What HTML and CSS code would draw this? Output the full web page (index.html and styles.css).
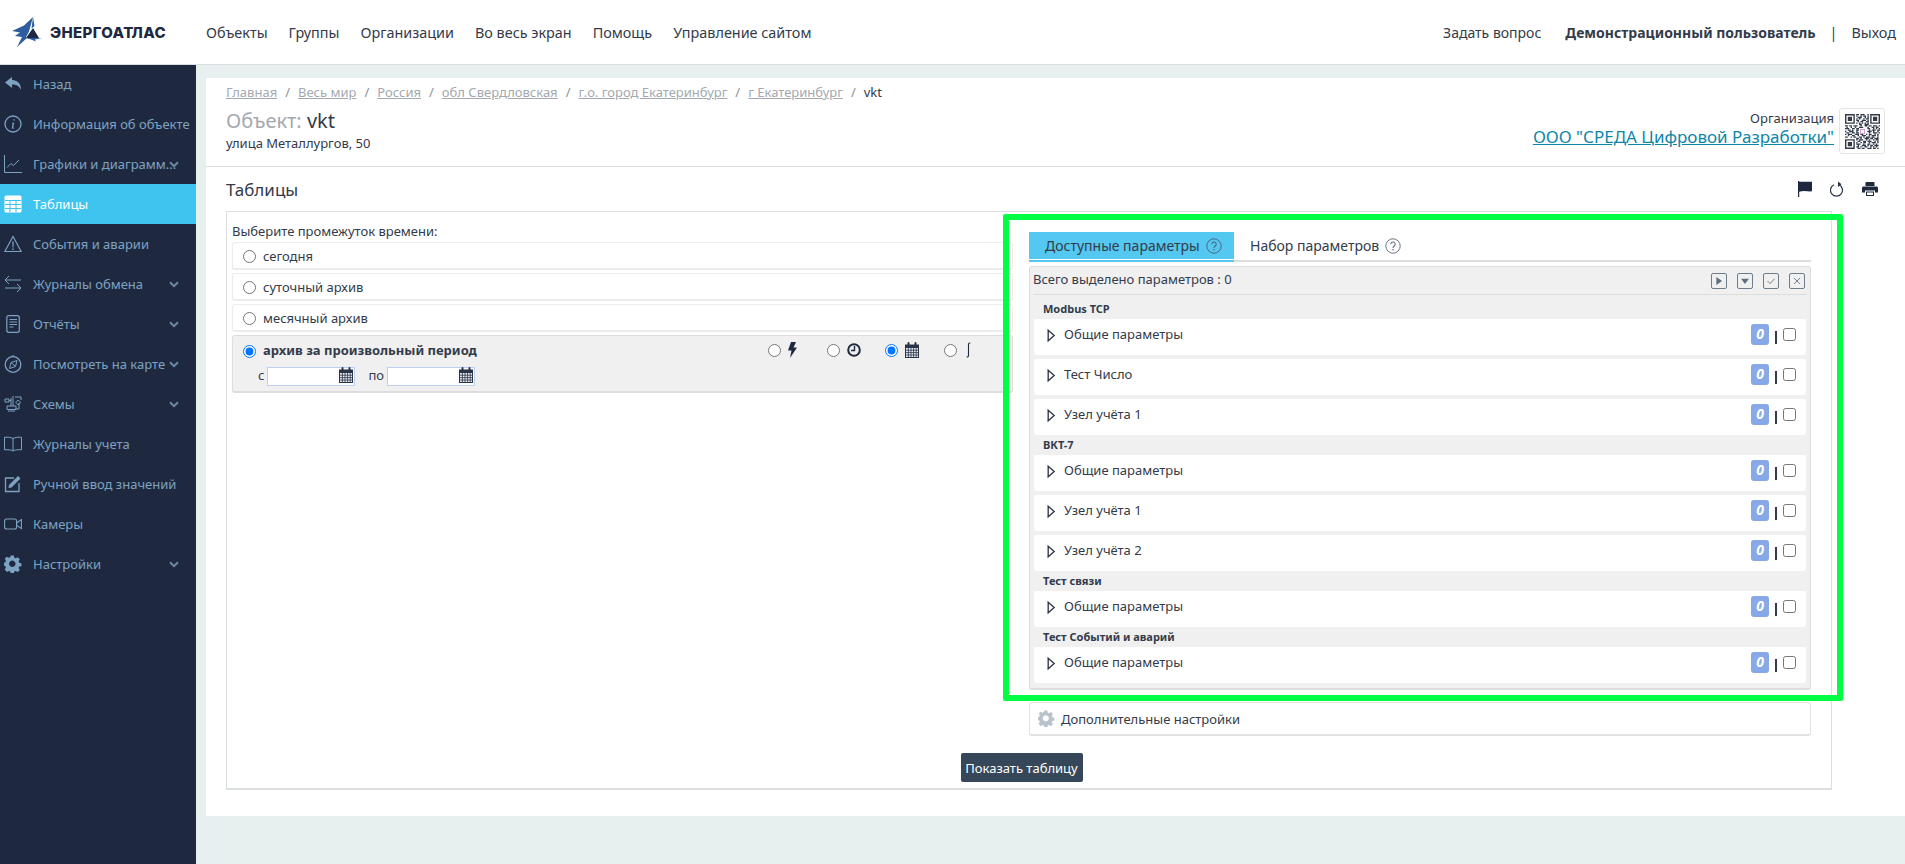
FILE: index.html
```html
<!DOCTYPE html>
<html lang="ru">
<head>
<meta charset="utf-8">
<title>Таблицы</title>
<link rel="stylesheet" href="styles.css">
</head>
<body>
<svg class="sprite" aria-hidden="true">
  <symbol id="chev" viewBox="0 0 10 7"><path d="M1 1.2l4 4 4-4" fill="none" stroke="currentColor" stroke-width="2"/></symbol>
  <symbol id="cal" viewBox="0 0 14 16"><path d="M0 2.5h2.5V1a1 1 0 0 1 2 0v1.5h5V1a1 1 0 0 1 2 0v1.5H14V16H0z" fill="#2a3448"/><path d="M1 6h12v9H1z" fill="#e9edf2"/><path d="M1 8.2h12M1 10.6h12M1 13h12M3.4 6v9M6 6v9M8.6 6v9M11.2 6v9" stroke="#2a3448" stroke-width=".8"/></symbol>
  <symbol id="tri" viewBox="0 0 9 13"><path d="M1.2 1.2l6 5.3-6 5.3z" fill="none" stroke="#333b4a" stroke-width="1.4"/></symbol>
  <symbol id="q" viewBox="0 0 16 16"><circle cx="8" cy="8" r="7.2" fill="none" stroke="currentColor"/><path d="M5.8 6.2a2.2 2.2 0 1 1 3.4 1.8c-.8.5-1.2 1-1.2 1.9" fill="none" stroke="currentColor" stroke-width="1.1"/><circle cx="8" cy="11.8" r=".8" fill="currentColor"/></symbol>
</svg>

<header class="topbar">
  <a class="logo">
    <svg class="logo-mark" viewBox="0 0 30 30"><path d="M21 0L12 8.500 0 14l8 1.500-5 3.500 7 1L5 30l10-9-1-1 3-5.500z" fill="#2f5d9f"/><path d="M21 0l1.500 9-3 2.500z" fill="#2f5d9f"/><path d="M21 11l6 10H14z" fill="#1e293f"/><path d="M14 21h16l-7 1.500 1 2-5-2z" fill="#2f5d9f"/></svg>
    <span class="logo-text">ЭНЕРГОАТЛАС</span>
  </a>
  <nav class="topnav">
    <a>Объекты</a><a>Группы</a><a>Организации</a><a>Во весь экран</a><a>Помощь</a><a>Управление сайтом</a>
  </nav>
  <div class="topright">
    <a class="ask">Задать вопрос</a>
    <b class="user">Демонстрационный пользователь</b>
    <span class="sep">|</span>
    <a>Выход</a>
  </div>
</header>

<div class="layout">
  <aside class="sidebar">
    <a class="side-item"><svg class="side-ico" viewBox="0 0 18 16"><path d="M8 1L1 6.500 8 12V8.500c4 0 7 1 9 5.500 0-6-3-9.500-9-10z" fill="currentColor"/></svg><span>Назад</span></a>
    <a class="side-item"><svg class="side-ico" viewBox="0 0 18 18"><circle cx="9" cy="9" r="8" fill="none" stroke="currentColor" stroke-width="1.300"/><path d="M9.500 4.200h1.300v1.400H9.500zM8 7.800h2.200l-1 5h1.200v.8H7.700l1-5H8z" fill="currentColor"/></svg><span>Информация об объекте</span></a>
    <a class="side-item"><svg class="side-ico" viewBox="0 0 18 18"><path d="M.5 0v17.500H18M3 12.500l4-4 2.500 2L15 5" fill="none" stroke="currentColor"/></svg><span>Графики и диаграмм...</span><svg class="chev"><use href="#chev"/></svg></a>
    <a class="side-item active"><svg class="side-ico" viewBox="0 0 18 18"><rect x=".5" y=".5" width="17" height="17" rx="1.500" fill="#fff"/><path d="M1 5.500h16M1 9.500h16M1 13.500h16M6 5.500V17M12 5.500V17" stroke="#3fc4f0" stroke-width="1"/></svg><span>Таблицы</span></a>
    <a class="side-item"><svg class="side-ico" viewBox="0 0 18 18"><path d="M9 1.500L.8 16.500h16.400z" fill="none" stroke="currentColor" stroke-width="1.100"/><path d="M8.300 6.500h1.400l-.2 6h-1zM8.300 13.500h1.400v1.400H8.300z" fill="currentColor"/></svg><span>События и аварии</span></a>
    <a class="side-item"><svg class="side-ico" viewBox="0 0 18 18"><path d="M5 1L1 5l4 4M1 5h16M13 9l4 4-4 4M17 13H1" fill="none" stroke="currentColor"/></svg><span>Журналы обмена</span><svg class="chev"><use href="#chev"/></svg></a>
    <a class="side-item"><svg class="side-ico" viewBox="0 0 18 18"><rect x="2.800" y=".7" width="12.500" height="16.600" rx="2" fill="none" stroke="currentColor" stroke-width="1.200"/><path d="M5.500 4.500h7.500M5.500 7h7.500M5.500 9.500h7.500M5.500 12h4" stroke="currentColor"/></svg><span>Отчёты</span><svg class="chev"><use href="#chev"/></svg></a>
    <a class="side-item"><svg class="side-ico" viewBox="0 0 18 18"><circle cx="9" cy="9.500" r="7.800" fill="none" stroke="currentColor" stroke-width="1.300"/><path d="M7.500 1h3M13 5.500l-6 2-1.500 6 6-2zM7 7.500l4.500 4" fill="none" stroke="currentColor"/></svg><span>Посмотреть на карте</span><svg class="chev"><use href="#chev"/></svg></a>
    <a class="side-item"><svg class="side-ico" viewBox="0 0 18 18"><path d="M1 4h4v3H1zM7 3v8M9 1v10M5 5.500h2M11 2h6v3M14 5.500a2 2 0 1 0 .1 0zM15 8v6H11M3 11h9v3.500H3zM4 16h7" fill="none" stroke="currentColor"/></svg><span>Схемы</span><svg class="chev"><use href="#chev"/></svg></a>
    <a class="side-item"><svg class="side-ico" viewBox="0 0 18 18"><path d="M9 3.500C7 2.300 4 2 .5 2.300v12.500C4 14.500 7 14.800 9 16c2-1.200 5-1.500 8.500-1.200V2.300C14 2 11 2.300 9 3.500zV16" fill="none" stroke="currentColor"/></svg><span>Журналы учета</span></a>
    <a class="side-item"><svg class="side-ico" viewBox="0 0 18 18"><path d="M10 3H1.500v13.500H15V8" fill="none" stroke="currentColor" stroke-width="1.300"/><path d="M5 10l9-9 2.500 2.500-9 9L4.500 13z" fill="currentColor"/></svg><span>Ручной ввод значений</span></a>
    <a class="side-item"><svg class="side-ico" viewBox="0 0 18 18"><rect x=".6" y="4" width="12" height="10" rx="2" fill="none" stroke="currentColor" stroke-width="1.100"/><path d="M12.600 8l4.800-3.500v9L12.600 10.500z" fill="none" stroke="currentColor" stroke-width="1.100"/></svg><span>Камеры</span></a>
    <a class="side-item"><svg class="side-ico" viewBox="0 0 18 18"><path fill-rule="evenodd" d="M7.300.5h3.400l.5 2.400 1.500.7 2.200-1.200 2.300 2.300-1.300 2.200.6 1.500 2.400.5v3.200l-2.400.5-.6 1.500 1.300 2.100-2.300 2.400-2.200-1.300-1.500.6-.5 2.400H7.300l-.5-2.400-1.500-.6-2.200 1.300L.8 15.700l1.300-2.100-.6-1.500L0 11.600V8.400l1.500-.5.6-1.500L.8 4.200l2.300-2.300 2.200 1.200 1.500-.7zM9 6a3.500 3.500 0 1 0 .01 0z" transform="scale(.92)" fill="currentColor"/></svg><span>Настройки</span><svg class="chev"><use href="#chev"/></svg></a>
  </aside>

  <main class="content">
    <div class="page">
      <div class="page-head">
        <div>
          <div class="crumbs"><a>Главная</a><i>/</i><a>Весь мир</a><i>/</i><a>Россия</a><i>/</i><a>обл Свердловская</a><i>/</i><a>г.о. город Екатеринбург</a><i>/</i><a>г Екатеринбург</a><i>/</i><span>vkt</span></div>
          <h1 class="obj"><span>Объект:</span> vkt</h1>
          <div class="addr">улица Металлургов, 50</div>
        </div>
        <div class="org">
          <div class="org-text">
            <div class="org-label">Организация</div>
            <a class="org-link">ООО "СРЕДА Цифровой Разработки"</a>
          </div>
          <div class="qr">
            <svg viewBox="0 0 25 25" width="35" height="35">
              <path fill="none" stroke="#333b4a" d="M.5.5h6v6h-6zM18.500.5h6v6h-6zM.5 18.500h6v6h-6z"/>
              <path fill="#333b4a" d="M2 2h3v3H2zM20 2h3v3h-3zM2 20h3v3H2z"/>
              <path fill="none" stroke="#333b4a" stroke-width=".9" d="M8 .5h2m1 0h3m2 0h1M8 1.500h1m2 0h1m1 0h2m1 0h1M9 2.500h3m2 0h1m1 0h1M8 3.500h1m1 0h1m2 0h1m1 0h2M8 4.500h2m2 0h3m1 0h1M9 5.500h1m1 0h2m2 0h2M8 6.500h1m1 0h1m1 0h1m1 0h1m1 0h1M10 7.500h2m2 0h3M0 8.500h2m1 0h2m1 0h3m2 0h1m2 0h2m1 0h2m1 0h3m1 0h1M1 9.500h1m2 0h1m2 0h1m2 0h3m3 0h1m2 0h2m1 0h2M0 10.500h3m2 0h2m1 0h2m6 0h2m2 0h1m1 0h1m1 0h1M2 11.500h2m1 0h1m2 0h2m7 0h1m1 0h3m1 0h2M0 12.500h1m2 0h3m2 0h1m7 0h3m1 0h1m2 0h1M1 13.500h2m2 0h2m1 0h2m7 0h1m2 0h3m1 0h1M0 14.500h1m1 0h3m2 0h3m1 0h2m2 0h1m1 0h2m2 0h1m1 0h1M2 15.500h1m2 0h2m2 0h1m2 0h3m2 0h1m1 0h3m1 0h1M0 16.500h2m2 0h1m1 0h2m2 0h2m1 0h1m1 0h3m1 0h2m2 0h1M8 17.500h2m1 0h1m2 0h3m1 0h2m1 0h3M8 18.500h1m1 0h3m2 0h1m1 0h1m2 0h1m1 0h2M9 19.500h2m2 0h2m1 0h3m2 0h1m1 0h1M8 20.500h1m2 0h1m1 0h2m2 0h1m1 0h3m1 0h1M8 21.500h3m2 0h1m2 0h2m2 0h1m1 0h1M9 22.500h1m2 0h3m1 0h1m1 0h2m1 0h3M8 23.500h2m1 0h1m2 0h2m2 0h1m1 0h1m1 0h1M9 24.500h2m1 0h2m2 0h3m1 0h2m1 0h1"/>
              <rect x="11" y="11" width="3" height="3" fill="#fff" stroke="#c88fd0" stroke-width=".6"/>
            </svg>
          </div>
        </div>
      </div>

      <section class="section">
        <div class="section-title">
          <h2>Таблицы</h2>
          <div class="tools">
            <svg class="tool" viewBox="0 0 14 16"><path d="M0 0h1.200v16H0zM1.200 .8h12.800v9.500C10 10.800 6 9 1.200 10.800z" fill="#1e293f"/></svg>
            <svg class="tool t-ref" viewBox="0 0 14 16"><path d="M4 3.700a6 6 0 1 0 5 0" fill="none" stroke="#2a3448" stroke-width="1.200"/><path d="M8 .5l0 5.500 3.500-2.700z" fill="#2a3448"/></svg>
            <svg class="tool t-print" viewBox="0 0 16 14"><path d="M3.500 4V.7C3.500 .3 3.800 0 4.200 0h7.600c.4 0 .7.300.7.700V4z" fill="#1e293f"/><path d="M1.500 4.500h13c.8 0 1.500.7 1.500 1.500v4.500h-3V8.500H3v2H0V6c0-.8.700-1.500 1.500-1.500z" fill="#1e293f"/><path d="M4 9.500h8V14H4z" fill="#1e293f"/><path d="M5 10.500h6v2.500H5z" fill="#fff"/></svg>
          </div>
        </div>

        <div class="box">
          <div class="box-grid">
            <div class="time-col">
              <div class="time-label">Выберите промежуток времени:</div>
              <label class="time-item"><input type="radio" name="p"><span>сегодня</span></label>
              <label class="time-item"><input type="radio" name="p"><span>суточный архив</span></label>
              <label class="time-item"><input type="radio" name="p"><span>месячный архив</span></label>
              <div class="time-item custom">
                <div class="custom-row">
                  <label class="custom-title"><input type="radio" name="p" checked><b>архив за произвольный период</b></label>
                  <div class="granul">
                    <label><input type="radio" name="g"><svg class="g-ico" viewBox="0 0 9 16"><path d="M3 0h5L5.500 5.500H9L2 16l1.500-7.500H0z" fill="#1e293f"/></svg></label>
                    <label><input type="radio" name="g"><svg class="g-ico wide" viewBox="0 0 14 14"><circle cx="7" cy="7" r="5.800" fill="none" stroke="#1e293f" stroke-width="2"/><path d="M7.500 3v4.500H4" fill="none" stroke="#1e293f" stroke-width="1.400"/></svg></label>
                    <label><input type="radio" name="g" checked><svg class="g-ico wide cal-s"><use href="#cal"/></svg></label>
                    <label><input type="radio" name="g"><svg class="g-ico" viewBox="0 0 6 16"><path d="M4.800 1.200C3.500.5 3 1.500 3 3v10c0 1.500-.5 2.500-1.800 1.800" fill="none" stroke="#1e293f" stroke-width="1.100"/></svg></label>
                  </div>
                </div>
                <div class="date-row">
                  <span>с</span>
                  <div class="date"><input type="text" aria-label="с"><svg class="date-cal"><use href="#cal"/></svg></div>
                  <span class="po">по</span>
                  <div class="date"><input type="text" aria-label="по"><svg class="date-cal"><use href="#cal"/></svg></div>
                </div>
              </div>
            </div>

            <div class="param-col">
              <div class="tabs">
                <a class="tab active">Доступные параметры<svg class="q"><use href="#q"/></svg></a>
                <a class="tab">Набор параметров<svg class="q"><use href="#q"/></svg></a>
              </div>
              <div class="panel">
                <div class="panel-head">
                  <span>Всего выделено параметров : 0</span>
                  <div class="panel-btns">
                    <span class="pbtn"><svg viewBox="0 0 16 16"><path d="M5 3.500l6.500 4.500L5 12.500z" fill="#5f6f80"/></svg></span>
                    <span class="pbtn"><svg viewBox="0 0 16 16"><path d="M3.500 5.500h9L8 11.500z" fill="#5f6f80"/></svg></span>
                    <span class="pbtn"><svg viewBox="0 0 16 16"><path d="M4 8l3 3 5-5.500" fill="none" stroke="#5f6f80"/></svg></span>
                    <span class="pbtn"><svg viewBox="0 0 16 16"><path d="M4.500 4.500l7 7m0-7l-7 7" fill="none" stroke="#5f6f80"/></svg></span>
                  </div>
                </div>
                <div class="group">Modbus TCP</div>
                <div class="row"><svg class="r-tri"><use href="#tri"/></svg><span class="r-name">Общие параметры</span><span class="badge">0</span><span class="pipe"></span><input type="checkbox" aria-label="выбрать"></div>
                <div class="row"><svg class="r-tri"><use href="#tri"/></svg><span class="r-name">Тест Число</span><span class="badge">0</span><span class="pipe"></span><input type="checkbox" aria-label="выбрать"></div>
                <div class="row"><svg class="r-tri"><use href="#tri"/></svg><span class="r-name">Узел учёта 1</span><span class="badge">0</span><span class="pipe"></span><input type="checkbox" aria-label="выбрать"></div>
                <div class="group">ВКТ-7</div>
                <div class="row"><svg class="r-tri"><use href="#tri"/></svg><span class="r-name">Общие параметры</span><span class="badge">0</span><span class="pipe"></span><input type="checkbox" aria-label="выбрать"></div>
                <div class="row"><svg class="r-tri"><use href="#tri"/></svg><span class="r-name">Узел учёта 1</span><span class="badge">0</span><span class="pipe"></span><input type="checkbox" aria-label="выбрать"></div>
                <div class="row"><svg class="r-tri"><use href="#tri"/></svg><span class="r-name">Узел учёта 2</span><span class="badge">0</span><span class="pipe"></span><input type="checkbox" aria-label="выбрать"></div>
                <div class="group">Тест связи</div>
                <div class="row"><svg class="r-tri"><use href="#tri"/></svg><span class="r-name">Общие параметры</span><span class="badge">0</span><span class="pipe"></span><input type="checkbox" aria-label="выбрать"></div>
                <div class="group">Тест Событий и аварий</div>
                <div class="row"><svg class="r-tri"><use href="#tri"/></svg><span class="r-name">Общие параметры</span><span class="badge">0</span><span class="pipe"></span><input type="checkbox" aria-label="выбрать"></div>
              </div>
              <div class="more">
                <svg class="more-gear" viewBox="0 0 18 18"><path fill-rule="evenodd" d="M7.300.5h3.400l.5 2.400 1.500.7 2.200-1.200 2.300 2.300-1.300 2.200.6 1.500 2.400.5v3.200l-2.400.5-.6 1.500 1.300 2.100-2.300 2.400-2.200-1.300-1.500.6-.5 2.400H7.300l-.5-2.400-1.500-.6-2.200 1.300L.8 15.700l1.300-2.100-.6-1.500L0 11.600V8.400l1.500-.5.6-1.500L.8 4.200l2.300-2.300 2.200 1.200 1.500-.7zM9 6a3.500 3.500 0 1 0 .01 0z" transform="scale(.92)" fill="#b9c3cc"/></svg>
                <span>Дополнительные настройки</span>
              </div>
            </div>
          </div>
          <div class="actions"><button class="show-btn" type="button">Показать таблицу</button></div>
          <div class="highlight"></div>
        </div>
      </section>
    </div>
  </main>
</div>
</body>
</html>
```
FILE: styles.css
```css
* { box-sizing: border-box; }
html, body { margin: 0; height: 100%; }
body {
  font-family: "Noto Sans", "Liberation Sans", sans-serif;
  color: #333b4a;
  font-size: 13px;
  background: #e8f0ef;
  display: flex;
  flex-direction: column;
  height: 864px;
  overflow: hidden;
}
h1, h2 { margin: 0; font-weight: 400; }
.sprite { display: none; }

.topbar {
  height: 64px;
  flex: none;
  background: #fff;
  box-shadow: 0 1px 0 #dcdfe0;
  position: relative;
  z-index: 2;
  display: flex;
  align-items: center;
  padding: 0 9px 0 12px;
  font-size: 14.4px;
}
.logo { display: flex; align-items: center; gap: 8px; width: 194px; flex: none; }
.logo-mark { width: 30px; height: 30px; }
.logo-text { font-family: Inter, sans-serif; font-weight: 800; font-size: 15px; color: #1e293f; letter-spacing: .35px; }
.topnav { display: flex; gap: 21px; }
.topright { margin-left: auto; display: flex; align-items: center; }
.ask { margin-right: 24px; font-size: 14px; }
.user { font-size: 14px; font-weight: 700; }
.sep { margin: 0 14px; }

.layout { flex: 1; display: flex; min-height: 0; }
.sidebar { width: 196px; flex: none; background: #1e293f; color: #7ea3c2; font-size: 13px; }
.side-item { height: 40px; display: flex; align-items: center; padding-left: 4px; position: relative; white-space: nowrap; }
.side-item > span { margin-left: 11px; }
.side-ico { width: 18px; height: 18px; flex: none; color: #7ea3c2; }
.side-item.active { background: #3fc4f0; color: #fff; font-weight: 400; }
.chev { position: absolute; left: 169px; top: 17px; width: 10px; height: 7px; color: #6c8aa5; }

.content { flex: 1; min-width: 0; padding: 14px 0 48px 10px; display: flex; }
.page { flex: 1; background: #fff; display: flex; flex-direction: column; }

.page-head { height: 89px; flex: none; border-bottom: 1px solid #dcdfe0; padding: 5px 20px 0; display: flex; justify-content: space-between; }
.crumbs { font-size: 13px; line-height: 18px; color: #9aa1a8; white-space: nowrap; }
.crumbs a { text-decoration: underline; color: #a3a9af; }
.crumbs i { font-style: normal; margin: 0 8px; color: #8b929a; }
.crumbs span { color: #333b4a; }
.obj { font-size: 20px; line-height: 28px; margin-top: 6px; color: #333b4a; }
.obj span { color: #a3a9af; }
.addr { font-size: 13px; line-height: 16px; color: #333b4a; margin-top: 0; }
.org { display: flex; gap: 5px; margin-top: 25px; height: 46px; }
.org-text { text-align: right; }
.org-label { font-size: 13px; line-height: 18px; padding-top: 1px; }
.org-link { font-size: 17px; line-height: 20px; color: #0e86a8; text-decoration: underline; display: block; white-space: nowrap; }
.qr { width: 46px; height: 46px; border: 1px solid #e2e4e6; border-radius: 3px; display: flex; align-items: center; justify-content: center; }

.section { padding: 0 73px 0 20px; }
.section-title { height: 44px; display: flex; align-items: center; justify-content: space-between; margin-right: -46px; }
.section-title h2 { font-size: 17px; }
.tools { display: flex; align-items: center; gap: 18px; }
.tool { width: 14px; height: 16px; display: block; }
.t-ref { width: 14px; }
.t-print { width: 16px; height: 14px; }

.box { position: relative; height: 579px; border: 1px solid #dcdfe0; border-bottom-width: 2px; padding: 0 20px 0 5px; }
.box-grid { display: grid; grid-template-columns: 781px 782px; column-gap: 16px; }

.time-col { padding-top: 10px; }
.time-label { font-size: 13px; line-height: 18px; margin-bottom: 2px; }
.time-item { display: flex; align-items: center; height: 28px; margin-bottom: 3px; padding: 0 10px; border: 1px solid #ececec; border-bottom-width: 2px; border-radius: 3px; font-size: 13px; gap: 7px; }
.time-item input, .custom-title input { margin: 2px 0 0; width: 13px; height: 13px; }
.time-item.custom { display: block; height: 58px; background: #f0f0f0; border-color: #dddddd; padding: 6px 10px 0; }
.custom-row { display: flex; justify-content: space-between; height: 16px; align-items: center; }
.custom-title { display: flex; align-items: center; gap: 7px; }
.granul { display: flex; }
.granul label { display: flex; align-items: center; width: 58.500px; gap: 7px; }
.granul input { margin: 0; width: 13px; height: 13px; }
.g-ico { width: 9px; height: 16px; }
.g-ico.wide { width: 14px; height: 14px; }
.g-ico.cal-s { height: 16px; }
.date-row { display: flex; align-items: center; margin-top: 7px; padding-left: 15px; gap: 3px; }
.date { position: relative; width: 88px; height: 19px; }
.date input { width: 100%; height: 100%; border: 1px solid #bcd0f0; background: #fff; padding: 0; display: block; }
.date-cal { position: absolute; right: 2px; top: 2px; width: 14px; height: 16px; }
.po { margin-left: 10px; }

.param-col { padding-top: 20px; }
.tabs { display: flex; height: 30px; border-bottom: 2px solid #dddddd; font-size: 14px; }
.tab { height: 30px; display: flex; align-items: center; padding: 0 0 3px 16px; gap: 6px; white-space: nowrap; }
.tab.active { width: 205px; flex: none; background: linear-gradient(#54c8f0 27px, #fff 27px, #fff 28px, #54c8f0 28px); }
.q { width: 16px; height: 16px; color: #6b7480; }
.tab.active .q { color: #4a6a80; }
.panel { margin-top: 4px; height: 424px; background: #f0f0f0; border: 1px solid #dddddd; border-bottom-width: 2px; border-radius: 3px; padding: 0 3px; }
.panel-head { height: 28px; border-bottom: 1px solid #dcdcdc; display: flex; align-items: center; justify-content: space-between; margin-bottom: 8px; font-size: 13px; padding-bottom: 3px; }
.panel-btns { display: flex; gap: 10px; padding-right: 2px; margin-top: 3px; }
.pbtn { width: 16px; height: 16px; border: 1px solid #6e7d8c; border-radius: 2px; display: block; }
.pbtn svg { display: block; width: 14px; height: 14px; }
.group { height: 16px; line-height: 12px; font-size: 11px; font-weight: 700; padding-left: 10px; }
.row { height: 36px; margin: 0 1px 4px; background: #fff; border-radius: 2px; display: flex; align-items: flex-start; padding: 5px 10px 0 13px; font-size: 13px; }
.r-tri { width: 9px; height: 13px; margin-top: 5px; flex: none; }
.r-name { margin-left: 8px; line-height: 21px; flex: 1; }
.badge { width: 18px; height: 21px; background: #87a9e8; color: #fff; font-style: italic; font-weight: 700; font-size: 14px; line-height: 20px; text-align: center; border-radius: 3px; }
.pipe { width: 2px; height: 13px; background: #333b4a; margin: 7px 6px 0; }
.row input { margin: 4px 0 0; width: 13px; height: 13px; }
.more { margin-top: 12px; height: 34px; border: 1px solid #e2e2e2; border-bottom-width: 2px; border-radius: 3px; display: flex; align-items: center; padding-left: 8px; gap: 6px; font-size: 13px; }
.more-gear { width: 17px; height: 17px; }
.actions { display: flex; justify-content: center; margin-top: 17px; }
.show-btn { height: 29px; width: 122px; background: #364759; color: #fff; border: 0; border-radius: 2px; font: 13px "Noto Sans", sans-serif; padding: 0; }
.highlight { position: absolute; left: 776px; top: 2px; width: 840px; height: 487px; border: 6px solid #00ff44; border-radius: 2px; pointer-events: none; }
```
